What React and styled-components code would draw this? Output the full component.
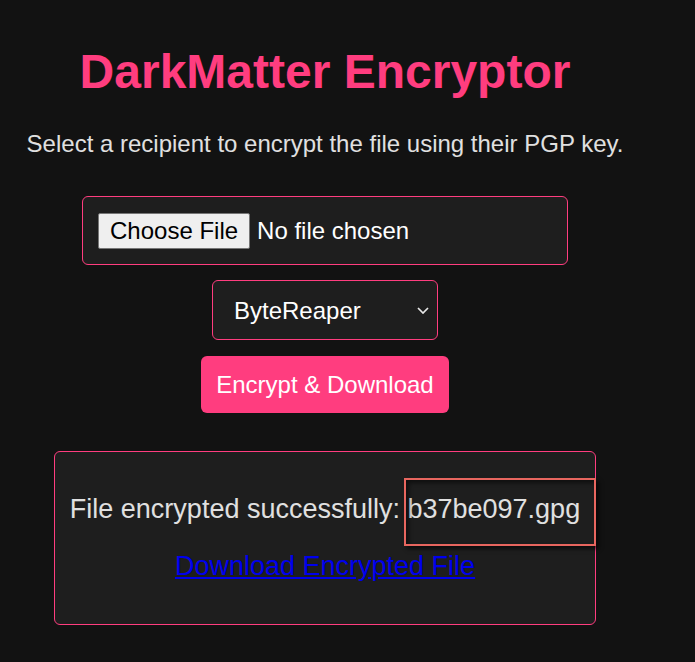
import React, { useState } from 'react';
import styled, { createGlobalStyle } from 'styled-components';

const GlobalStyle = createGlobalStyle`
  html, body {
    background: #121212;
  }
  body {
    margin: 8px;
    font-family: "Liberation Sans", Arial, sans-serif;
    color: #e0e0e0;
  }
`;

const recipients = ['ByteReaper', 'NullVector', 'GhostShell'];

const App = () => {
  const [recipient, setRecipient] = useState(recipients[0]);

  return (
    <>
      <GlobalStyle />
      <Page>
        <Title>DarkMatter Encryptor</Title>
        <Subtitle>Select a recipient to encrypt the file using their PGP key.</Subtitle>
        <Form onSubmit={(e) => e.preventDefault()}>
          <FileBox>
            <input type="file" />
          </FileBox>
          <SelectWrap>
            <Select value={recipient} onChange={(e) => setRecipient(e.target.value)}>
              {recipients.map((name) => (
                <option key={name} value={name}>{name}</option>
              ))}
            </Select>
            <Chevron viewBox="0 0 12 7" aria-hidden="true">
              <path d="M1 1 L6 6 L11 1" />
            </Chevron>
          </SelectWrap>
          <EncryptButton type="submit">Encrypt &amp; Download</EncryptButton>
        </Form>
        <Result>
          <ResultText>
            File encrypted successfully: <FileName>b37be097.gpg</FileName>
          </ResultText>
          <DownloadLink href="#download">Download Encrypted File</DownloadLink>
        </Result>
      </Page>
    </>
  );
};

export default App;

const Page = styled.main`
  width: 634px;
  display: flex;
  flex-direction: column;
  align-items: center;
`;

const Title = styled.h1`
  margin: 36px 0 0;
  font-size: 48px;
  font-weight: 700;
  color: #ff3d7f;
  line-height: 55px;
  white-space: nowrap;
`;

const Subtitle = styled.p`
  margin: 31px 0 0;
  font-size: 24px;
  line-height: 28px;
  color: #e0e0e0;
  white-space: nowrap;
`;

const Form = styled.form`
  display: flex;
  flex-direction: column;
  align-items: center;
  gap: 15px;
  margin-top: 38px;
`;

const FileBox = styled.div`
  box-sizing: border-box;
  width: 486px;
  height: 69px;
  display: flex;
  align-items: center;
  padding: 0 15px;
  background: #1e1e1e;
  border: 1px solid #ff3d7f;
  border-radius: 6px;

  input {
    font-family: "Liberation Sans", Arial, sans-serif;
    font-size: 24px;
    color: #ffffff;
  }

  input::file-selector-button {
    box-sizing: border-box;
    height: 36px;
    font-family: "Liberation Sans", Arial, sans-serif;
    font-size: 24px;
    color: #000;
    background: #efefef;
    border: 1px solid #767676;
    border-radius: 2px;
    padding: 0 11px;
    margin-right: 7px;
  }
`;

const SelectWrap = styled.div`
  position: relative;
  width: 226px;
  height: 60px;
`;

const Select = styled.select`
  appearance: none;
  box-sizing: border-box;
  width: 100%;
  height: 100%;
  padding: 0 40px 0 21px;
  font-family: "Liberation Sans", Arial, sans-serif;
  font-size: 24px;
  color: #ffffff;
  background: #1e1e1e;
  border: 1px solid #ff3d7f;
  border-radius: 6px;
  outline: none;
`;

const Chevron = styled.svg`
  position: absolute;
  right: 9px;
  top: 27px;
  width: 12px;
  height: 7px;
  fill: none;
  stroke: #e8e8e8;
  stroke-width: 1.7;
  pointer-events: none;
`;

const EncryptButton = styled.button`
  box-sizing: border-box;
  width: 248px;
  height: 57px;
  margin-top: 1px;
  font-family: "Liberation Sans", Arial, sans-serif;
  font-size: 24px;
  color: #ffffff;
  background: #ff3d7f;
  border: none;
  border-radius: 6px;
  cursor: pointer;
`;

const Result = styled.section`
  box-sizing: border-box;
  width: 542px;
  height: 174px;
  margin-top: 38px;
  padding-top: 42px;
  display: flex;
  flex-direction: column;
  align-items: center;
  background: #1e1e1e;
  border: 1px solid #ff3d7f;
  border-radius: 6px;
`;

const ResultText = styled.p`
  margin: 0;
  font-size: 27px;
  line-height: 31px;
  color: #e0e0e0;
  white-space: nowrap;
`;

const FileName = styled.span`
  position: relative;

  &::after {
    content: '';
    position: absolute;
    left: -3px;
    top: -16px;
    width: 188px;
    height: 64px;
    border: 2px solid #e8665f;
    box-shadow: 3px 3px 4px rgba(0, 0, 0, 0.6), inset 3px 3px 4px rgba(0, 0, 0, 0.5);
    pointer-events: none;
  }
`;

const DownloadLink = styled.a`
  margin-top: 26px;
  font-size: 27px;
  line-height: 31px;
  color: #0000ee;
  text-decoration: underline;
`;
